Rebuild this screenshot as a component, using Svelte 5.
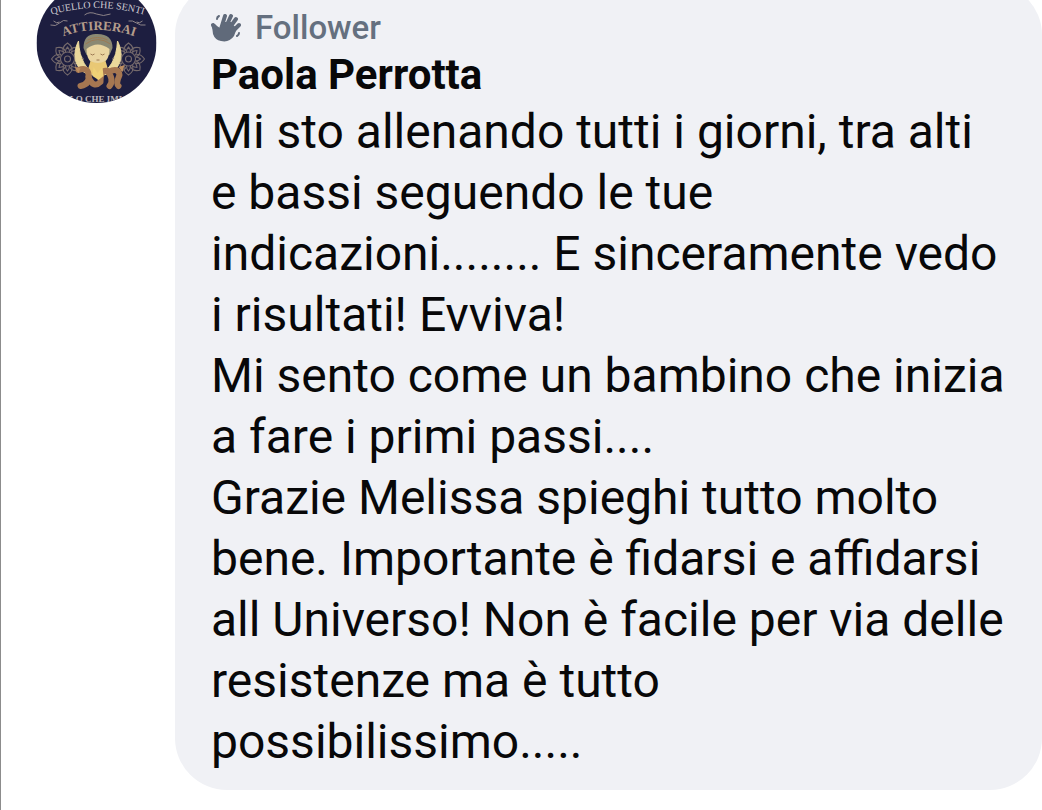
<script>
    const comment = {
        badge: "Follower",
        author: "Paola Perrotta",
        paragraphs: [
            "Mi sto allenando tutti i giorni, tra alti e bassi seguendo le tue indicazioni........ E sinceramente vedo i risultati! Evviva!",
            "Mi sento come un bambino che inizia a fare i primi passi....",
            "Grazie Melissa spieghi tutto molto bene. Importante è fidarsi e affidarsi all Universo! Non è facile per via delle resistenze ma è tutto possibilissimo.....",
        ],
    };

    const petals = [0, 45, 90, 135, 180, 225, 270, 315];
    const mandalas = [31, 92];
</script>

<main class="thread">
    <article class="comment">
        <svg class="avatar" viewBox="0 0 120 120" role="img" aria-label={comment.author}>
            <defs>
                <clipPath id="disc"><circle cx="60" cy="60" r="60" /></clipPath>
                <path id="arc-top" d="M8 34Q61 16 114 34" />
                <path id="arc-title" d="M20 56Q61 38 105 56" />
            </defs>
            <g clip-path="url(#disc)">
                <rect width="120" height="120" fill="#1d1e40" />

                <g fill="none" stroke="#8d8488" stroke-width="1">
                    <path d="M14 42q5 2 9-2t8-2M17 38q3 3 6 1M92 38q4-1 8 2t9 2M100 39q3 2 6-1" />
                    <path d="M48 32q5-4 12-1t14 0" />
                </g>

                {#each mandalas as x}
                    <g transform="translate({x} 76)" fill="none" stroke="#74696b" stroke-width="1.1">
                        <circle r="3" />
                        <circle r="7" />
                        {#each petals as angle}
                            <path transform="rotate({angle})" d="M-4 -7Q-6 -12 0 -16Q6 -12 4 -7M-2 -7Q-2 -10 0 -12Q2 -10 2 -7" />
                        {/each}
                    </g>
                {/each}

                <path d="M42 58C33 76 42 93 60 92C50 87 43 77 42 58Z" fill="#ead89b" stroke="#ead89b" />
                <path d="M81 58C90 76 81 93 62 92C73 87 80 77 81 58Z" fill="#ead89b" stroke="#ead89b" />

                <path d="M47 65Q47 50 61 51Q76 51 76 65L73 72H50Z" fill="#8b8973" />
                <path d="M50 66Q61 57 73 66Q73 80 61 82Q50 80 50 66Z" fill="#ead5a0" />
                <path d="M54 78Q61 82 69 78L73 91H50Z" fill="#e9c875" />
                <g fill="none" stroke="#9c7953" stroke-width="1">
                    <path d="M54 71q2 2 4 0M64 71q2 2 4 0M60 77h3" />
                    <path d="M49 61q12-9 25 0M51 57q10-5 20 0" />
                </g>

                <g fill="none" stroke="#a67751" stroke-width="6" stroke-linecap="round" stroke-linejoin="round">
                    <path d="M42 87Q51 84 52 91Q54 101 44 103" />
                    <path d="M52 94Q57 106 64 99Q64 86 71 88Q78 97 73 103" />
                    <path d="M72 89Q82 84 83 92Q79 101 82 103" />
                </g>
                <path d="M38 84l6 1-2 5zM82 84l6-2-2 7z" fill="#bd8e60" />
                <path d="M57 84l4 6 5-6 1 9-5 4-6-4z" fill="#efd176" />

                <text class="motto" font-size="10" fill="#cfcbd2">
                    <textPath href="#arc-top" startOffset="50%" text-anchor="middle">QUELLO CHE SENTI</textPath>
                </text>
                <text class="motto title" font-size="13" fill="#b49c8b">
                    <textPath href="#arc-title" startOffset="50%" text-anchor="middle">ATTIRERAI</textPath>
                </text>
                <text class="motto title" x="62" y="119" font-size="9" fill="#bdb8bf" text-anchor="middle">LO CHE IMM</text>
            </g>
        </svg>

        <div class="bubble">
            <div class="badge">
                <svg class="wave" viewBox="0 0 30 30" aria-hidden="true">
                    <g fill="none" stroke="#606a7a" stroke-linecap="round" stroke-linejoin="round">
                        <path stroke-width="4" d="M2 12L6 20M10 16L14 3M14 16L20 3M17 17L25 6M20 20L28 12" />
                        <path stroke-width="2" d="M6 6Q6 4 8 3M26 23Q28 22 28 20" />
                    </g>
                    <path fill="#606a7a" d="M1 13Q3 9 6 13L9 15L11 9H20L22 12L26 15L23 23Q18 30 10 28Q4 27 2 21Z" />
                </svg>
                <span>{comment.badge}</span>
            </div>
            <h2 class="author">{comment.author}</h2>
            {#each comment.paragraphs as paragraph}
                <p>{paragraph}</p>
            {/each}
        </div>
    </article>
</main>

<style>
    :global(body) {
        margin: 0;
        background: #ffffff;
    }

    .thread {
        min-height: 100vh;
        box-sizing: border-box;
        overflow: hidden;
        border-left: 1px solid #8c8c8c;
        font-family: Roboto, "Liberation Sans", sans-serif;
        color: #080809;
    }

    /* the thread is scrolled a little past the top of this comment */
    .comment {
        display: flex;
        align-items: flex-start;
        gap: 18px;
        margin-top: -17px;
        padding-left: 35px;
    }

    .avatar {
        flex: none;
        width: 121px;
        height: 120px;
    }

    .motto {
        font-family: "Liberation Serif", serif;
    }

    .title {
        font-weight: 700;
    }

    .bubble {
        flex: 1;
        min-width: 0;
        padding: 24px 36px 18px;
        border-radius: 52px;
        background: #f0f1f5;
    }

    .badge {
        display: flex;
        align-items: center;
        gap: 14px;
        font-size: 33px;
        font-weight: 500;
        line-height: 41px;
        color: #65707f;
    }

    .wave {
        width: 30px;
        height: 30px;
    }

    .author {
        margin: 0;
        font-size: 42px;
        font-weight: 700;
        line-height: 53px;
    }

    p {
        margin: 0;
        font-size: 48px;
        line-height: 61px;
    }
</style>
